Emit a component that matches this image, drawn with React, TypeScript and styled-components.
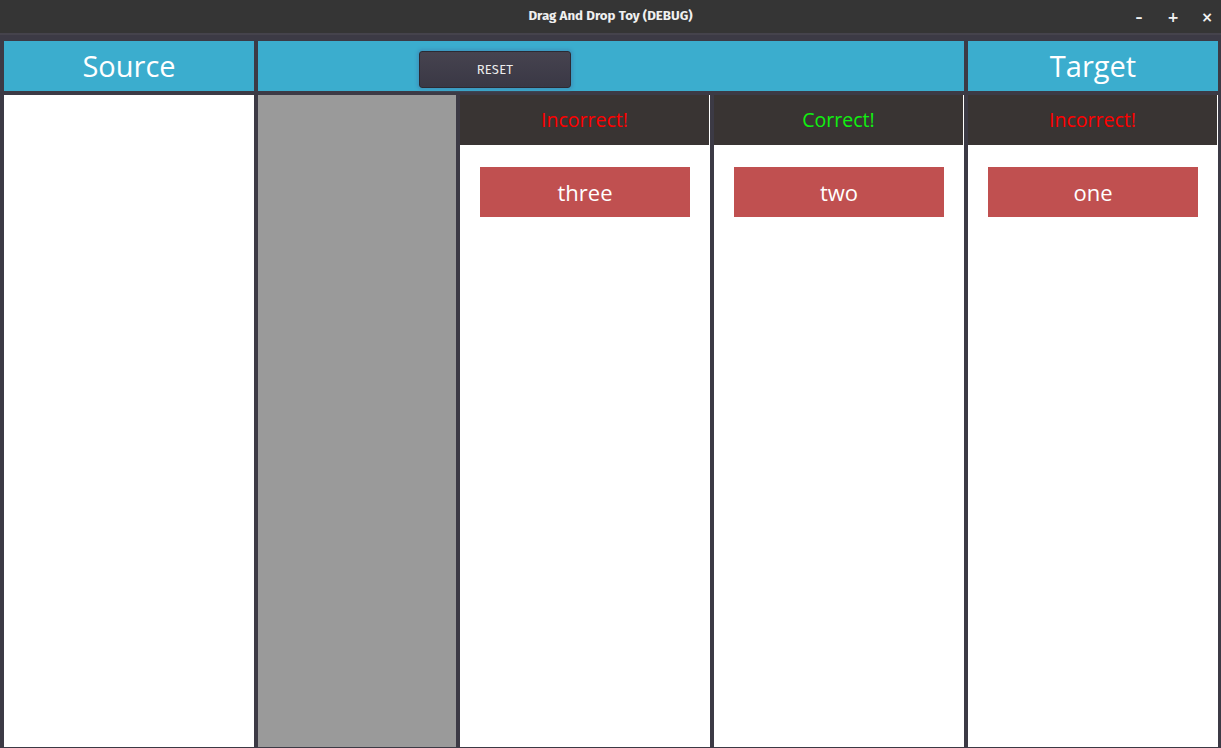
import React from "react";
import styled, { createGlobalStyle } from "styled-components";

const Global = createGlobalStyle`
  html, body { margin: 0; padding: 0; background: #3c3a45; }
  body { font-family: "Open Sans", "Noto Sans", sans-serif; }
  * { box-sizing: border-box; }
`;

const Window = styled.div`
  width: 1221px;
  height: 748px;
  display: flex;
  flex-direction: column;
  background: #3c3a45;
  overflow: hidden;
`;

const TitleBar = styled.div`
  position: relative;
  height: 35px;
  flex: none;
  background: #353535;
  border-bottom: 2px solid #45434c;
  display: flex;
  align-items: center;
  justify-content: center;
`;

const Title = styled.div`
  color: #f0f0f0;
  font-family: "Fira Sans", "Open Sans", sans-serif;
  font-weight: 700;
  font-size: 13.3px;
  margin-top: -2px;
`;

const Controls = styled.div`
  position: absolute;
  right: -3px;
  top: 0;
  height: 33px;
  display: flex;
  align-items: center;
`;

const Ctrl = styled.div`
  width: 34px;
  text-align: center;
  color: #f2f2f2;
  font-family: "DejaVu Sans", sans-serif;
  font-weight: 700;
  font-size: 14px;
`;

const Body = styled.div`
  flex: 1;
  display: grid;
  grid-template-columns: 250px 706px 250px;
  grid-template-rows: 50px 652px;
  column-gap: 4px;
  row-gap: 4px;
  padding: 6px 3px 0 4px;
`;

const Header = styled.div`
  background: #3badce;
  color: #ffffff;
  display: flex;
  align-items: center;
  justify-content: center;
  font-size: 29px;
  padding-bottom: 2px;
`;

const ToolHeader = styled.div`
  background: #3badce;
  display: flex;
  align-items: flex-start;
  padding: 10px 0 0 161px;
`;

const ResetButton = styled.button`
  width: 152px;
  height: 37px;
  border: 1px solid #2c2a33;
  border-radius: 3px;
  background: linear-gradient(#46434f, #3a3845);
  box-shadow: 0 0 3px 2px rgba(60, 150, 190, 0.95);
  color: #ececec;
  font-family: "Fira Sans", "Open Sans", sans-serif;
  font-size: 13px;
  letter-spacing: 0.2px;
  padding: 0;
`;

const White = styled.div`
  background: #ffffff;
`;

const Middle = styled.div`
  display: grid;
  grid-template-columns: 198px 250px 250px;
  column-gap: 4px;
`;

const Gray = styled.div`
  background: #9a9a9a;
`;

const Column = styled.div`
  background: #ffffff;
  display: flex;
  flex-direction: column;
`;

const Status = styled.div<{ $ok: boolean }>`
  height: 50px;
  width: 249px;
  background: #393433;
  color: ${(p) => (p.$ok ? "#10f010" : "#ff0000")};
  font-size: 19.5px;
  display: flex;
  align-items: center;
  justify-content: center;
  padding-bottom: 2px;
`;

const Card = styled.div`
  margin: 22px 0 0 20px;
  width: 210px;
  height: 50px;
  background: #c05050;
  color: #ffffff;
  font-size: 22px;
  display: flex;
  align-items: center;
  justify-content: center;
  padding-bottom: 1px;
`;

const cols = [
  { ok: false, label: "three" },
  { ok: true, label: "two" },
];

export default function App() {
  return (
    <Window>
      <Global />
      <TitleBar>
        <Title>Drag And Drop Toy (DEBUG)</Title>
        <Controls>
          <Ctrl>–</Ctrl>
          <Ctrl>+</Ctrl>
          <Ctrl>×</Ctrl>
        </Controls>
      </TitleBar>
      <Body>
        <Header>Source</Header>
        <ToolHeader>
          <ResetButton>RESET</ResetButton>
        </ToolHeader>
        <Header>Target</Header>
        <White />
        <Middle>
          <Gray />
          {cols.map((c) => (
            <Column key={c.label}>
              <Status $ok={c.ok}>{c.ok ? "Correct!" : "Incorrect!"}</Status>
              <Card>{c.label}</Card>
            </Column>
          ))}
        </Middle>
        <Column>
          <Status $ok={false}>Incorrect!</Status>
          <Card>one</Card>
        </Column>
      </Body>
    </Window>
  );
}
